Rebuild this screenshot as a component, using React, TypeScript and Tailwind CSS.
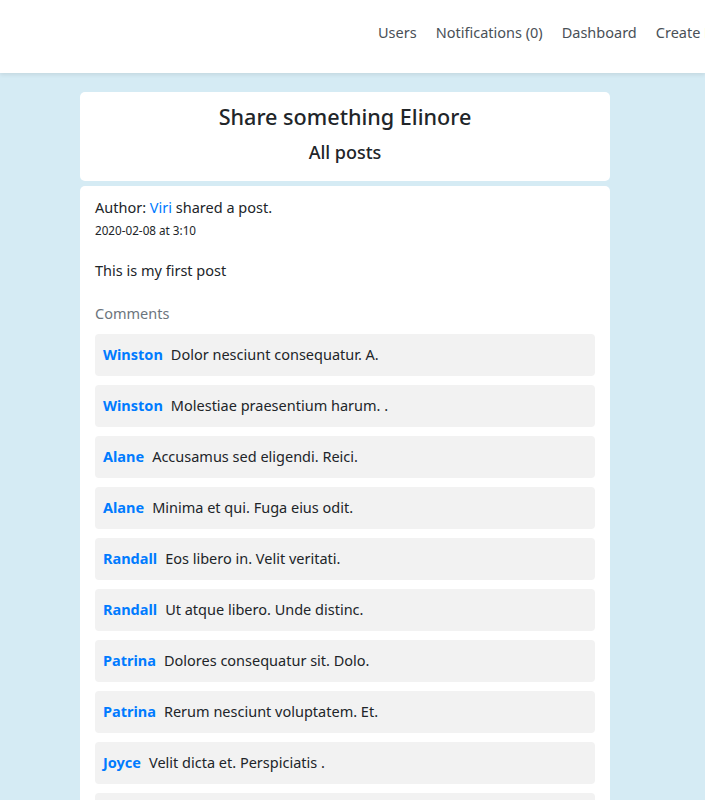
const comments = [
  { name: 'Winston', text: 'Dolor nesciunt consequatur. A.' },
  { name: 'Winston', text: 'Molestiae praesentium harum. .' },
  { name: 'Alane', text: 'Accusamus sed eligendi. Reici.' },
  { name: 'Alane', text: 'Minima et qui. Fuga eius odit.' },
  { name: 'Randall', text: 'Eos libero in. Velit veritati.' },
  { name: 'Randall', text: 'Ut atque libero. Unde distinc.' },
  { name: 'Patrina', text: 'Dolores consequatur sit. Dolo.' },
  { name: 'Patrina', text: 'Rerum nesciunt voluptatem. Et.' },
  { name: 'Joyce', text: 'Velit dicta et. Perspiciatis .' },
  { name: 'Joyce', text: 'Et quia voluptas. Nisi sed.' },
];

export default function App() {
  return (
    <div className="min-h-screen bg-[#d5ebf4] font-['Noto_Sans',sans-serif] text-[#212529] overflow-hidden">
      {/* Navbar */}
      <nav className="h-[73px] bg-white shadow-[0_2px_4px_rgba(0,0,0,0.08)] flex items-start pl-[378px] pt-[21px] whitespace-nowrap">
        <div className="flex gap-[19px] text-[14.5px] leading-[22px] text-[#495057]">
          <a>Users</a>
          <a>Notifications (0)</a>
          <a>Dashboard</a>
          <a>Create Post</a>
        </div>
      </nav>

      <main className="w-[530px] ml-[80px] pt-[19px]">
        <div className="bg-white rounded-[5px] h-[89px] pt-[10px] text-center">
          <h1 className="text-[21.6px] leading-[30px] font-medium">Share something Elinore</h1>
          <h2 className="text-[18px] leading-[30px] font-medium mt-[5px]">All posts</h2>
        </div>

        <div className="bg-white rounded-t-[5px] mt-[5px] px-[15px] pt-[11px]">
          <p className="text-[14.5px] leading-[20px]">
            Author: <a className="text-[#007bff]">Viri</a> shared a post.
          </p>
          <p className="text-[11.7px] leading-[18px] mt-[4px]">2020-02-08 at 3:10</p>
          <p className="text-[14.5px] leading-[20px] mt-[21px]">This is my first post</p>
          <p className="text-[14.5px] leading-[20px] mt-[23px] text-[#6c757d]">Comments</p>
          <div className="mt-[11px] flex flex-col gap-[9px]">
            {comments.map((c, i) => (
              <div key={i} className="bg-[#f2f2f2] rounded-[4px] h-[42px] flex items-center px-[8px] text-[14.5px]">
                <span className="font-bold text-[#007bff]">{c.name}</span>
                <span className="ml-[8px]">{c.text}</span>
              </div>
            ))}
          </div>
        </div>
      </main>
    </div>
  );
}
